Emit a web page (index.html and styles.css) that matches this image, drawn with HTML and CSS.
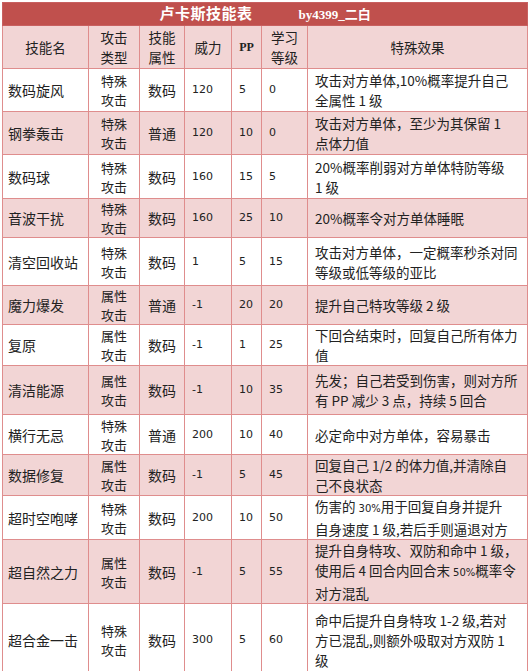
FILE: index.html
```html
<!DOCTYPE html>
<html lang="zh">
<head>
<meta charset="utf-8">
<title>卢卡斯技能表</title>
<link rel="stylesheet" href="styles.css">
</head>
<body>
<table class="skills">
  <colgroup>
    <col class="c-name"><col class="c-type"><col class="c-attr"><col class="c-pow"><col class="c-pp"><col class="c-lv"><col class="c-eff">
  </colgroup>
  <tr class="title-row">
    <td colspan="7"><span class="title">卢卡斯技能表</span><span class="author">by4399_二白</span></td>
  </tr>
  <tr class="head h43">
    <th>技能名</th><th>攻击<br>类型</th><th>技能<br>属性</th><th>威力</th><th class="pp">PP</th><th>学习<br>等级</th><th>特殊效果</th>
  </tr>
  <tr class="h43">
    <td class="name">数码旋风</td><td class="type">特殊<br>攻击</td><td class="attr">数码</td><td class="num">120</td><td class="num">5</td><td class="num">0</td><td class="eff">攻击对方单体,10%概率提升自己<br>全属性 1 级</td>
  </tr>
  <tr class="pink h43">
    <td class="name">钢拳轰击</td><td class="type">特殊<br>攻击</td><td class="attr">普通</td><td class="num">120</td><td class="num">10</td><td class="num">0</td><td class="eff">攻击对方单体，至少为其保留 1<br>点体力值</td>
  </tr>
  <tr class="h44">
    <td class="name">数码球</td><td class="type">特殊<br>攻击</td><td class="attr">数码</td><td class="num">160</td><td class="num">15</td><td class="num">5</td><td class="eff">20%概率削弱对方单体特防等级<br>1 级</td>
  </tr>
  <tr class="pink h38">
    <td class="name">音波干扰</td><td class="type">特殊<br>攻击</td><td class="attr">数码</td><td class="num">160</td><td class="num">25</td><td class="num">10</td><td class="eff">20%概率令对方单体睡眠</td>
  </tr>
  <tr class="h48">
    <td class="name">清空回收站</td><td class="type">特殊<br>攻击</td><td class="attr">数码</td><td class="num">1</td><td class="num">5</td><td class="num">15</td><td class="eff">攻击对方单体，一定概率秒杀对同<br>等级或低等级的亚比</td>
  </tr>
  <tr class="pink h39">
    <td class="name">魔力爆发</td><td class="type">属性<br>攻击</td><td class="attr">普通</td><td class="num">-1</td><td class="num">20</td><td class="num">20</td><td class="eff">提升自己特攻等级 2 级</td>
  </tr>
  <tr class="h39">
    <td class="name">复原</td><td class="type">属性<br>攻击</td><td class="attr">数码</td><td class="num">-1</td><td class="num">1</td><td class="num">25</td><td class="eff">下回合结束时，回复自己所有体力<br>值</td>
  </tr>
  <tr class="pink h49">
    <td class="name">清洁能源</td><td class="type">属性<br>攻击</td><td class="attr">数码</td><td class="num">-1</td><td class="num">10</td><td class="num">35</td><td class="eff">先发；自己若受到伤害，则对方所<br>有 PP 减少 3 点，持续 5 回合</td>
  </tr>
  <tr class="h40">
    <td class="name">横行无忌</td><td class="type">特殊<br>攻击</td><td class="attr">普通</td><td class="num">200</td><td class="num">10</td><td class="num">40</td><td class="eff">必定命中对方单体，容易暴击</td>
  </tr>
  <tr class="pink h40">
    <td class="name">数据修复</td><td class="type">属性<br>攻击</td><td class="attr">数码</td><td class="num">-1</td><td class="num">5</td><td class="num">45</td><td class="eff">回复自己 1/2 的体力值,并清除自<br>己不良状态</td>
  </tr>
  <tr class="h40">
    <td class="name">超时空咆哮</td><td class="type">特殊<br>攻击</td><td class="attr">数码</td><td class="num">200</td><td class="num">10</td><td class="num">50</td><td class="eff">伤害的 <span class="small">30%</span>用于回复自身并提升<br>自身速度 1 级,若后手则逼退对方</td>
  </tr>
  <tr class="pink h60">
    <td class="name">超自然之力</td><td class="type">属性<br>攻击</td><td class="attr">数码</td><td class="num">-1</td><td class="num">5</td><td class="num">55</td><td class="eff">提升自身特攻、双防和命中 1 级，<br>使用后 4 回合内回合末 <span class="small">50%</span>概率令<br>对方混乱</td>
  </tr>
  <tr class="h72">
    <td class="name">超合金一击</td><td class="type">特殊<br>攻击</td><td class="attr">数码</td><td class="num">300</td><td class="num">5</td><td class="num">60</td><td class="eff">命中后提升自身特攻 1-2 级,若对<br>方已混乱,则额外吸取对方双防 1<br>级</td>
  </tr>
</table>
</body>
</html>
```
FILE: styles.css
```css
html, body {
  margin: 0;
  padding: 0;
  background: #ffffff;
}
body {
  padding: 2px 0 0 2px;
  font-family: "Noto Sans CJK SC", "Noto Sans", sans-serif;
  color: #222;
}
.skills {
  border-collapse: collapse;
  table-layout: fixed;
  width: 525px;
  border: 1px solid #d98383;
}
.c-name { width: 86px; }
.c-type { width: 51px; }
.c-attr { width: 45px; }
.c-pow { width: 47px; }
.c-pp { width: 30px; }
.c-lv { width: 46px; }
.c-eff { width: 220px; }

.skills td, .skills th {
  border: 1px solid #df8d8d;
  padding: 0 5px;
  vertical-align: middle;
  font-size: 14px;
  line-height: 20px;
  font-weight: normal;
  white-space: nowrap;
  overflow: hidden;
}
.title-row td {
  background: #c0504d;
  color: #fff;
  height: 20px;
  padding: 0;
  text-align: center;
  border-color: #c86060;
  line-height: 20px;
}
.title {
  font-weight: bold;
  font-size: 15px;
  letter-spacing: 0.5px;
}
.author {
  font-family: "Liberation Serif", "Noto Sans CJK SC", serif;
  font-weight: bold;
  font-size: 13px;
  margin-left: 46px;
}
.head th {
  background: #f2d5d5;
  text-align: center;
  color: #222;
  font-size: 13.5px;
  line-height: 20px;
}
.head th.pp {
  font-family: "Liberation Serif", serif;
  font-weight: bold;
  font-size: 12px;
}
.pink td {
  background: #f2d5d5;
}
.name {
  text-align: left;
  padding-left: 5px;
}
.skills td.type {
  text-align: center;
  font-size: 13px;
  line-height: 19px;
}
.attr {
  text-align: center;
}
.skills td.num {
  font-family: "DejaVu Sans", "Liberation Sans", sans-serif;
  font-size: 11px;
  text-align: left;
  padding-left: 7px;
}
.skills td.eff {
  font-size: 13.5px;
  line-height: 20px;
  padding-left: 7px;
  padding-right: 2px;
}
.small {
  font-family: "DejaVu Sans", sans-serif;
  font-size: 10px;
}
.h38 td, .h38 th { height: 37px; }
.h39 td { height: 38px; }
.h40 td { height: 39px; }
.h43 td, .h43 th { height: 42px; }
.h44 td { height: 43px; }
.h48 td { height: 47px; }
.h49 td { height: 48px; }
.h60 td { height: 59px; }
.h72 td { height: 71px; }
```
